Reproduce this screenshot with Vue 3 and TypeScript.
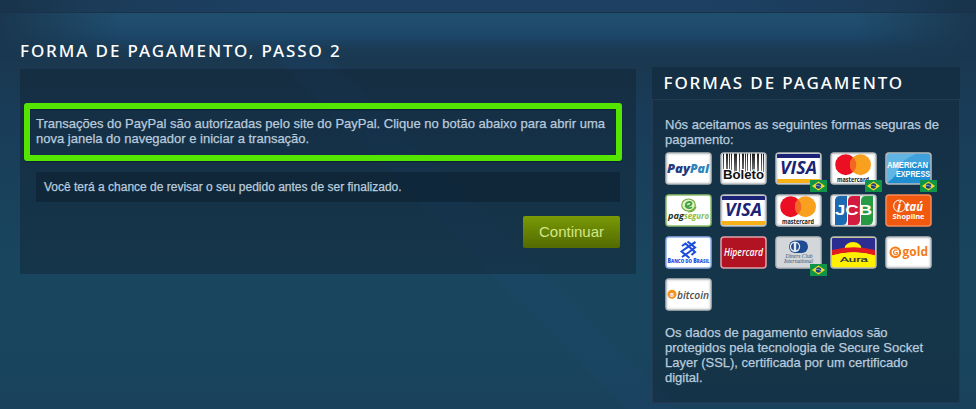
<script setup lang="ts">
interface Card {
  id: string
  brazil?: boolean
}

const cards: Card[] = [
  { id: 'paypal' },
  { id: 'boleto' },
  { id: 'visa', brazil: true },
  { id: 'mastercard', brazil: true },
  { id: 'amex', brazil: true },
  { id: 'pagseguro' },
  { id: 'visa' },
  { id: 'mastercard' },
  { id: 'jcb' },
  { id: 'itau' },
  { id: 'bb' },
  { id: 'hipercard' },
  { id: 'diners', brazil: true },
  { id: 'aura' },
  { id: 'gold' },
  { id: 'bitcoin' },
]

const fills: Record<string, string> = {
  amex: '#1f8fd2',
  itau: '#f0590e',
  hipercard: '#b11322',
  diners: '#d3d7da',
  aura: '#fff000',
}

const edges: Record<string, string> = {
  pagseguro: '#8cc06b',
  itau: '#f58a5a',
  bb: '#8fb0e8',
  hipercard: '#dba5aa',
}

const bars: number[][] = [
  [3, 1], [6, 2], [9, 1], [11, 1], [14, 3], [19, 1], [22, 2], [25, 1],
  [27, 1], [30, 1], [32, 3], [37, 2], [41, 1], [43, 1],
]
</script>

<template>
  <div class="page">
    <div class="topbar"></div>
    <div class="glow"></div>
    <main class="columns">
      <section class="main">
        <h2 class="title">FORMA DE PAGAMENTO, PASSO 2</h2>
        <div class="panel">
          <div class="highlight">
            <span>Transações do PayPal são autorizadas pelo site do PayPal. Clique no botão abaixo para abrir uma</span>
            <span>nova janela do navegador e iniciar a transação.</span>
          </div>
          <div class="review"><span>Você terá a chance de revisar o seu pedido antes de ser finalizado.</span></div>
          <button class="continue" type="button">Continuar</button>
        </div>
      </section>

      <aside class="side">
        <h2 class="side-title">FORMAS DE PAGAMENTO</h2>
        <div class="side-body">
          <p class="copy">Nós aceitamos as seguintes formas seguras de<br />pagamento:</p>
          <div class="cards">
            <div v-for="(c, i) in cards" :key="i" class="card">
              <svg width="47" height="33" viewBox="0 0 47 33">
                <defs>
                  <linearGradient :id="`bar-${i}`" x1="0" y1="0" x2="0" y2="19" gradientUnits="userSpaceOnUse">
                    <stop offset="0" stop-color="#111" />
                    <stop offset="1" stop-color="#777" />
                  </linearGradient>
                </defs>
                <rect x="1" y="1" width="45" height="31" rx="3" :fill="fills[c.id] ?? '#ffffff'" />
                <rect v-if="!fills[c.id] && !edges[c.id]" x="2.500" y="2.500" width="42" height="28" rx="2" fill="none" stroke="#e9ebec" stroke-width="1.500" />

                <g v-if="c.id === 'paypal'" class="paypal">
                  <text x="2" y="21" textLength="23" lengthAdjust="spacingAndGlyphs" fill="#253b80">Pay</text>
                  <text x="25" y="21" textLength="19" lengthAdjust="spacingAndGlyphs" fill="#2d84bd">Pal</text>
                </g>

                <g v-else-if="c.id === 'boleto'">
                  <rect v-for="b in bars" :key="b[0]" :x="b[0]" y="1" :width="b[1]" height="19" :fill="`url(#bar-${i})`" />
                  <text class="boleto" x="3" y="27.300" textLength="41" lengthAdjust="spacingAndGlyphs">Boleto</text>
                </g>

                <g v-else-if="c.id === 'visa'">
                  <rect x="2" y="2" width="43" height="4" fill="#1a2375" />
                  <rect x="2" y="27" width="43" height="4" fill="#f8b117" />
                  <text class="visa" x="5" y="22.300" textLength="37" lengthAdjust="spacingAndGlyphs">VISA</text>
                </g>

                <g v-else-if="c.id === 'mastercard'">
                  <circle cx="15.700" cy="12.700" r="10.500" fill="#ec0f24" />
                  <circle cx="30.500" cy="12.700" r="10.500" fill="#f9a01f" />
                  <path d="M23.100 5.200A10.500 10.500 0 0 1 23.100 20.200A10.500 10.500 0 0 1 23.100 5.200Z" fill="#f26722" />
                  <text class="master" x="7" y="29.500" textLength="32" lengthAdjust="spacingAndGlyphs">mastercard</text>
                </g>

                <g v-else-if="c.id === 'amex'">
                  <path d="M2 2H32Q16 8 14 16T2 31Z" fill="#7cc4ec" opacity=".7" />
                  <path d="M32 2H45V12Q33 10 14 16Q16 8 32 2Z" fill="#4faae0" opacity=".7" />
                  <text class="amex" x="2" y="15.700" textLength="41" lengthAdjust="spacingAndGlyphs">AMERICAN</text>
                  <text class="amex" x="11" y="24.500" textLength="34" lengthAdjust="spacingAndGlyphs">EXPRESS</text>
                </g>

                <g v-else-if="c.id === 'pagseguro'">
                  <ellipse cx="23.500" cy="11" rx="6.800" ry="6" fill="#e3f3cb" stroke="#72ae3c" stroke-width="1.200" />
                  <path d="M20 11.800c3 1 6.800-.6 6.500-2.600-.3-1.800-4.500-1.700-5.500 1-.8 3 2.500 5.200 6 3" fill="none" stroke="#45a33f" stroke-width="1.900" />
                  <path d="M31 12.500Q29.500 18 23 18" fill="none" stroke="#72ae3c" stroke-width="1.200" />
                  <text class="pag" x="3" y="25" textLength="16" lengthAdjust="spacingAndGlyphs" fill="#26361f">pag</text>
                  <text class="pag" x="19" y="25" textLength="25" lengthAdjust="spacingAndGlyphs" fill="#8cbd43">seguro</text>
                </g>

                <g v-else-if="c.id === 'jcb'">
                  <path d="M5 7Q5 2 10 2H17V26Q17 31 12 31H5Z" fill="#1b69b0" />
                  <path d="M18 7Q18 2 23 2H30V26Q30 31 25 31H18Z" fill="#d31b3f" />
                  <path d="M31 7Q31 2 36 2H43V26Q43 31 38 31H31Z" fill="#269b43" />
                  <text class="jcb" x="5" y="20.800" textLength="37" lengthAdjust="spacingAndGlyphs">JCB</text>
                </g>

                <g v-else-if="c.id === 'itau'">
                  <circle cx="14.500" cy="12" r="5.900" fill="none" stroke="#fff" stroke-width="1" />
                  <text class="itau" x="12.300" y="16.500">i</text>
                  <text class="itau" x="20" y="16.500" textLength="18" lengthAdjust="spacingAndGlyphs">taú</text>
                  <text class="shop" x="7.500" y="24.800" textLength="32" lengthAdjust="spacingAndGlyphs">Shopline</text>
                </g>

                <g v-else-if="c.id === 'bb'">
                  <g fill="none" stroke="#1c4fe0" stroke-width="2.100">
                    <path d="M22.500 5.500L30 11.500L23.500 16.500L17 21" />
                    <path d="M24.500 22L16.500 15.500L23 10.800L30.500 6" />
                    <path d="M17 10L20.500 7.500L30 16L26.500 19" />
                  </g>
                  <text class="bb" x="2.500" y="27" textLength="42" lengthAdjust="spacingAndGlyphs"><tspan class="big">B</tspan>ANCO DO <tspan class="big">B</tspan>RASIL</text>
                </g>

                <text v-else-if="c.id === 'hipercard'" class="hiper" x="4" y="19.500" textLength="39" lengthAdjust="spacingAndGlyphs">Hipercard</text>

                <g v-else-if="c.id === 'diners'">
                  <rect x="14" y="4.500" width="19" height="12.500" rx="6.200" fill="#1e4b94" />
                  <circle cx="20" cy="10.700" r="5.200" fill="#e8edf0" />
                  <path d="M18.800 6.900A4 4 0 0 0 18.800 14.500ZM21.200 6.900A4 4 0 0 1 21.200 14.500Z" fill="#1e4b94" />
                  <text class="diners" x="10.500" y="22" textLength="27" lengthAdjust="spacingAndGlyphs">Diners Club</text>
                  <text class="diners" x="9" y="27" textLength="29" lengthAdjust="spacingAndGlyphs">International</text>
                </g>

                <g v-else-if="c.id === 'aura'">
                  <path d="M2 2H45V17H2Z" fill="#2c2d90" />
                  <ellipse cx="23" cy="12.500" rx="8.500" ry="6.500" fill="#fff000" />
                  <path d="M2 14Q23.500 8.500 45 14V19.500Q23.500 13 2 19.500Z" fill="#e21b22" />
                  <path d="M2 19.500Q23.500 13 45 19.500V22H2Z" fill="#fff000" />
                  <text class="aura" x="10" y="26" textLength="28" lengthAdjust="spacingAndGlyphs">Aura</text>
                </g>

                <g v-else-if="c.id === 'gold'">
                  <circle cx="10.300" cy="16.300" r="4.800" fill="none" stroke="#f47b15" stroke-width="2.200" />
                  <path d="M12.300 14.400A2.300 2.300 0 1 0 12.300 18.100V16.500H10.500" fill="none" stroke="#f47b15" stroke-width="1.200" />
                  <text class="gold" x="17.500" y="20" textLength="25.500" lengthAdjust="spacingAndGlyphs">gold</text>
                </g>

                <g v-else>
                  <circle cx="7" cy="16.300" r="4.500" fill="#f7931a" />
                  <text class="coin" x="5" y="18.600">B</text>
                  <text class="bitcoin" x="12" y="20.500" textLength="32" lengthAdjust="spacingAndGlyphs">bitcoin</text>
                </g>

                <rect x="1" y="1" width="45" height="31" rx="3" fill="none" :stroke="edges[c.id] ?? '#b7babd'" stroke-width="1.500" />
              </svg>
              <svg v-if="c.brazil" class="flag" width="17" height="12" viewBox="0 0 17 12">
                <rect width="17" height="12" fill="#119447" />
                <path d="M8.500 1.500L15 6L8.500 10.500L2 6Z" fill="#f5df20" />
                <circle cx="8.500" cy="6" r="2.700" fill="#1d3e7c" />
                <path d="M6 5.300Q9 4.900 11 7" fill="none" stroke="#c9dce0" stroke-width=".6" />
              </svg>
            </div>
          </div>
          <p class="copy ssl">Os dados de pagamento enviados são<br />protegidos pela tecnologia de Secure Socket<br />Layer (SSL), certificada por um certificado<br />digital.</p>
        </div>
      </aside>
    </main>
  </div>
</template>

<style>
body {
  margin: 0;
}
</style>

<style scoped>
.page {
  position: relative;
  width: 976px;
  height: 409px;
  overflow: hidden;
  box-sizing: border-box;
  font-family: "Liberation Sans", Arial, sans-serif;
  color: #b9cbdd;
  background:
    linear-gradient(45deg, transparent 45%, rgba(29, 70, 116, 0.22) 45.6%, rgba(29, 70, 116, 0.22) 48.5%, transparent 49.500%),
    linear-gradient(180deg, #1a3850 0, #1a3850 65px, #193c58 110px, #19415c 190px, #19465f 270px, #19455e 350px, #1a415b 409px);
}
.topbar {
  height: 12px;
  border-bottom: 1px solid #19324a;
  background: linear-gradient(90deg, #18334a 0, #1b3b58 90px, #1d4063 300px, #1d4063 700px, #1b3b58 890px, #18334a 976px);
}
.glow {
  position: absolute;
  top: 13px;
  left: 0;
  width: 976px;
  height: 48px;
  background: linear-gradient(180deg, #204f6e 0, #204c6d 12px, #1c4567 24px, rgba(27, 62, 88, 0.6) 36px, transparent 48px);
  mask-image: linear-gradient(90deg, transparent 0, #000 120px, #000 856px, transparent 976px);
}
.columns {
  position: relative;
  display: flex;
  gap: 16px;
  padding: 0 16px 0 20px;
}
.main {
  width: 616px;
}
h2,
p {
  margin: 0;
}
.title,
.side-title {
  font-family: "Noto Sans", sans-serif;
  font-size: 17px;
  font-weight: 500;
  letter-spacing: 1.9px;
  white-space: nowrap;
  color: #fff;
}
.title {
  height: 56px;
  line-height: 76px;
}
.panel {
  height: 205px;
  box-sizing: border-box;
  padding: 34px 4px 0;
  background: rgba(15, 29, 42, 0.4);
}
.highlight {
  width: 598px;
  height: 58px;
  box-sizing: border-box;
  border: 6px solid #54e600;
  border-radius: 3px;
  padding: 7px 6px 0;
  display: flex;
  flex-direction: column;
  font-size: 13px;
  line-height: 15px;
  white-space: nowrap;
  box-shadow: 0 1px 1px #0c2530, inset 0 1px 1px #0c2530;
}
.highlight span,
.review span,
.copy {
  -webkit-text-stroke: 0.25px currentColor;
}
.review {
  width: 584px;
  height: 30px;
  box-sizing: border-box;
  margin: 11px 0 0 12px;
  padding-left: 8px;
  line-height: 30px;
  font-size: 12px;
  white-space: nowrap;
  background: rgba(8, 24, 38, 0.42);
}
.continue {
  display: block;
  width: 97px;
  height: 32px;
  margin: 14px 12px 0 auto;
  padding: 0;
  border: 0;
  border-radius: 2px;
  font-family: inherit;
  font-size: 15px;
  line-height: 32px;
  color: #d2e885;
  background: linear-gradient(180deg, #799905, #536a02);
}
.side {
  width: 308px;
  padding-top: 54px;
}
.side-title {
  height: 32px;
  box-sizing: border-box;
  padding-left: 11.5px;
  line-height: 32px;
  background: #142e43;
}
.side-body {
  height: 304px;
  box-sizing: border-box;
  border: 1px solid #243851;
  padding: 17px 0 0 12px;
  background: rgba(15, 29, 42, 0.4);
}
.copy {
  font-size: 13px;
  line-height: 15px;
  white-space: nowrap;
}
.cards {
  display: grid;
  grid-template-columns: repeat(5, 47px);
  grid-auto-rows: 33px;
  gap: 9px 8px;
  margin-top: 5px;
}
.card {
  position: relative;
}
.card svg {
  display: block;
  overflow: visible;
}
.card .flag {
  position: absolute;
  left: 35px;
  top: 28px;
}
.ssl {
  margin-top: 14px;
}
text {
  font-family: "Open Sans", sans-serif;
}
.paypal text {
  font-size: 13px;
  font-weight: 800;
  font-style: italic;
}
.boleto {
  font-family: "Liberation Sans", sans-serif;
  font-size: 13.5px;
  font-weight: 700;
  fill: #111;
  stroke: #fff;
  stroke-width: 2px;
  paint-order: stroke;
}
.visa {
  font-size: 17px;
  font-weight: 700;
  font-style: italic;
  fill: #1a2375;
}
.master {
  font-size: 6.5px;
  font-weight: 700;
  fill: #1b1b1b;
}
.amex {
  font-family: "Liberation Sans", sans-serif;
  font-size: 8.5px;
  font-weight: 700;
  fill: #fff;
}
.pag {
  font-size: 8.5px;
  font-weight: 700;
  font-style: italic;
}
.jcb {
  font-family: "Liberation Sans", sans-serif;
  font-size: 14px;
  font-weight: 700;
  fill: #fff;
}
.itau {
  font-size: 12px;
  font-weight: 700;
  font-style: italic;
  fill: #fff;
}
.shop {
  font-size: 7.5px;
  font-weight: 700;
  fill: #fff;
}
.bb {
  font-size: 5px;
  font-weight: 800;
  fill: #1c4fe0;
}
.big {
  font-size: 6px;
}
.hiper {
  font-size: 10px;
  font-weight: 600;
  font-style: italic;
  fill: #fff;
}
.diners {
  font-family: "Liberation Serif", serif;
  font-size: 6.5px;
  font-style: italic;
  fill: #2b5478;
}
.aura {
  font-family: "Liberation Sans", sans-serif;
  font-size: 8px;
  fill: #222b4b;
  stroke: #222b4b;
  stroke-width: 0.2px;
}
.gold {
  font-size: 12px;
  font-weight: 700;
  fill: #f47b15;
}
.coin {
  font-size: 6px;
  font-weight: 700;
  fill: #fff;
}
.bitcoin {
  font-size: 11px;
  font-weight: 600;
  font-style: italic;
  fill: #4d4d4d;
}
</style>
